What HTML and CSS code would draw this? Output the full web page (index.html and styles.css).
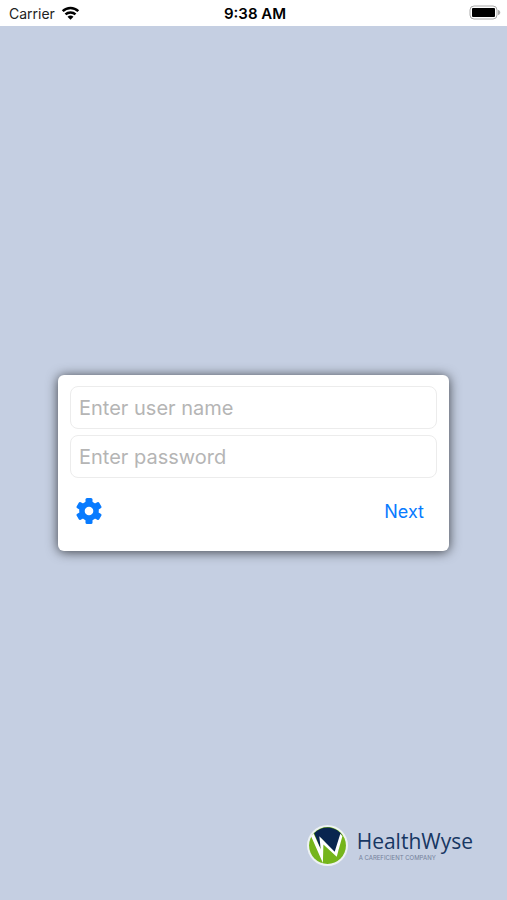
FILE: index.html
```html
<!DOCTYPE html>
<html lang="en">
  <head>
    <meta charset="UTF-8" />
    <meta name="viewport" content="width=device-width, initial-scale=1" />
    <title>HealthWyse</title>
    <link rel="stylesheet" href="styles.css">
  </head>
  <body>
    <header class="status-bar">
      <div class="carrier">
        <span>Carrier</span>
        <svg class="wifi-icon" viewBox="0 0 18 14" aria-hidden="true">
          <path d="M1.2 5.2a11.2 11.2 0 0 1 15.6 0M4 8.4a7.2 7.2 0 0 1 10 0" />
          <path class="wifi-dot" d="M9 13.8l-3-3a4.4 4.4 0 0 1 6 0z" />
        </svg>
      </div>
      <time class="clock">9:38 AM</time>
      <div class="battery">
        <svg class="battery-icon" viewBox="0 0 32 16" aria-hidden="true">
          <rect class="battery-shell" x="1" y="1" width="27" height="13" rx="4" />
          <rect x="3" y="3" width="23" height="9" rx="1" />
          <path class="battery-cap" d="M29 5c3 .5 3 4.5 0 5z" />
        </svg>
      </div>
    </header>
    <main class="login">
      <form class="login-card">
        <input class="login-input" type="text" id="username" placeholder="Enter user name" aria-label="User name" />
        <input class="login-input" type="password" id="password" placeholder="Enter password" aria-label="Password" />
        <div class="login-actions">
          <button type="button" class="settings-btn" aria-label="Settings">
            <svg class="settings-icon" viewBox="0 0 26 26" aria-hidden="true">
              <g class="gear-teeth">
                <rect x="9.5" y="0" width="7" height="26" rx="1.5" />
                <rect x="9.5" y="0" width="7" height="26" rx="1.5" transform="rotate(60 13 13)" />
                <rect x="9.5" y="0" width="7" height="26" rx="1.5" transform="rotate(120 13 13)" />
                <circle cx="13" cy="13" r="9.8" />
              </g>
              <circle class="gear-hole" cx="13" cy="13" r="4.3" />
            </svg>
          </button>
          <button type="submit" class="next-btn">Next</button>
        </div>
      </form>
    </main>
    <footer class="brand">
      <svg class="brand-mark" viewBox="0 0 40 40" aria-hidden="true">
        <circle cx="20" cy="20" r="20" fill="#edf2f3" />
        <circle cx="20" cy="20" r="18" fill="#75b51b" />
        <path d="M7 8C14 .5 27 .5 33.5 9L30 27 26 27 14 13 13 23z" fill="#09254f" />
        <path d="M4 11L6.500 8.500 13.500 24 12 11 27 26 32.500 8.500 34.500 11 29 31 16 19 15.500 37z" fill="#fff" />
      </svg>
      <div class="brand-text">
        <span class="brand-name">HealthWyse</span>
        <span class="brand-tag">A CAREFICIENT COMPANY</span>
      </div>
    </footer>
  </body>
</html>
```
FILE: styles.css
```css
* {
  box-sizing: border-box;
}
body {
  font-family: Inter, "Liberation Sans", sans-serif;
  margin: 0;
  min-height: 100vh;
  display: grid;
  grid-template-rows: 26px 1fr;
  background: #c5cfe2;
}
/* Status bar */
.status-bar {
  display: grid;
  grid-template-columns: 1fr auto 1fr;
  align-items: center;
  padding: 0 6px 0 9px;
  background: #fff;
  color: #222;
  font-size: 14px;
}
.carrier {
  display: flex;
  align-items: center;
  gap: 6px;
}
.wifi-icon {
  width: 19px;
  height: 14px;
  fill: none;
  stroke: #000;
  stroke-width: 2.5;
}
.wifi-icon .wifi-dot {
  fill: #000;
  stroke: none;
}
.clock {
  color: #000;
  font-size: 15px;
  font-weight: 600;
}
.battery {
  display: flex;
  justify-content: flex-end;
}
.battery-icon {
  width: 32px;
  height: 16px;
}
.battery-shell {
  fill: #fff;
  stroke: #aaa;
}
.battery-cap {
  fill: #aaa;
}
/* Login card */
.login {
  grid-area: 2 / 1;
  display: flex;
  justify-content: center;
  align-items: center;
  padding: 0 58px;
}
.login-card {
  width: 100%;
  max-width: 480px;
  display: flex;
  flex-direction: column;
  gap: 6px;
  padding: 11px 12px 19px;
  background: #fff;
  border-radius: 6px;
  box-shadow: 0 1px 12px rgba(0, 0, 0, 0.7);
}
.login-input {
  width: 100%;
  height: 43px;
  padding: 0 8px;
  border: 1px solid #ececec;
  border-radius: 8px;
  background: #fff;
  font-family: inherit;
  font-size: 20px;
}
.login-input::placeholder {
  color: #b5b5b5;
}
.login-actions {
  display: flex;
  justify-content: space-between;
  align-items: center;
  padding: 6px 6px 0;
}
.settings-btn,
.next-btn {
  border: none;
  background: none;
  color: #087bff;
  font-family: inherit;
  cursor: pointer;
}
.settings-btn {
  display: flex;
  padding: 8px 0;
}
.settings-icon {
  width: 26px;
  height: 26px;
}
.gear-teeth {
  fill: #087bff;
}
.gear-hole {
  fill: #fff;
}
.next-btn {
  padding: 8px 7px;
  font-size: 18px;
}
/* Brand */
.brand {
  grid-area: 2 / 1;
  align-self: end;
  justify-self: end;
  display: flex;
  align-items: center;
  gap: 9px;
  padding: 0 34px 34px 0;
}
.brand-mark {
  width: 41px;
  height: 41px;
}
.brand-text {
  display: flex;
  flex-direction: column;
  padding-bottom: 4px;
  font-family: "Open Sans", sans-serif;
}
.brand-name {
  color: #173763;
  font-size: 21px;
  font-weight: 500;
  line-height: 28px;
}
.brand-tag {
  padding-left: 2px;
  color: #74809a;
  font-family: Inter, sans-serif;
  font-size: 6px;
  line-height: 6px;
}
```
